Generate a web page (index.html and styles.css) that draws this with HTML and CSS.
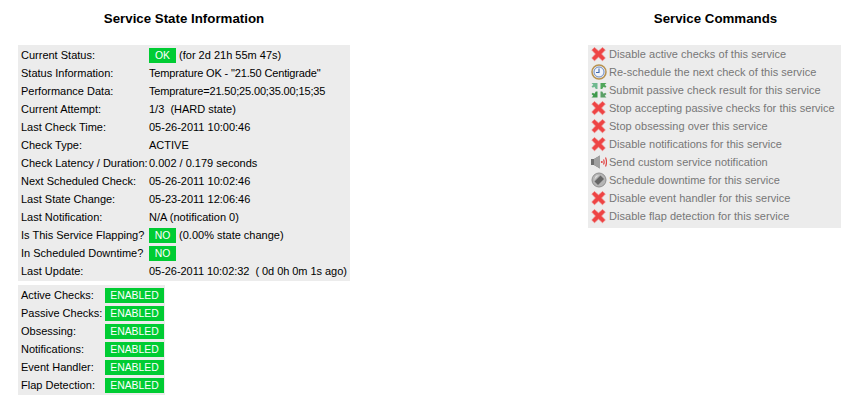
FILE: index.html
```html
<!doctype html>
<html>
<head>
<meta charset="utf-8">
<title>Service Information</title>
<link rel="stylesheet" href="styles.css">
</head>
<body>
<svg class="defs" width="0" height="0">
  <symbol id="i-x" viewBox="0 0 16 16">
    <path d="M3.500 1.500 7.500 5 11.500 1.500 14.300 4 10.500 8 14.300 12 11.500 14.800 7.500 11 3.500 14.800 .8 12 4.500 8 .8 4Z" fill="#ee4444" stroke="#ee8080" stroke-width=".7"/>
  </symbol>
  <symbol id="i-clock" viewBox="0 0 16 16">
    <circle cx="8" cy="8" r="7" fill="#e4e9f2" stroke="#b8924f" stroke-width="1.500"/>
    <circle cx="8" cy="8" r="5" fill="#f0f4fb" stroke="#6f8cc0" stroke-width="1"/>
    <path d="M8 4.500V8.500H5" fill="none" stroke="#3f68ad" stroke-width="1.100"/>
  </symbol>
  <symbol id="i-passive" viewBox="0 0 16 16">
    <path d="M.5 1H6.500V7H4.800L3.400 4.800 1.800 5.800.5 4.500 2.300 2.700Z" fill="#6fb98f"/>
    <path d="M15.500 1H9.500V7H11.200L12.600 4.800 14.200 5.800 15.500 4.500 13.700 2.700Z" fill="#4fa65a"/>
    <path d="M.5 15.500H6.500V9.500H4.800L3.400 11.700 1.800 10.700.5 12 2.300 13.800Z" fill="#3f9a4c"/>
    <path d="M15.500 15.500H9.500V9.500H11.200L12.600 11.700 14.200 10.700 15.500 12 13.700 13.800Z" fill="#5a9f65"/>
  </symbol>
  <symbol id="i-speaker" viewBox="0 0 16 16">
    <path d="M0 5H3L9 1.500V14.500L3 11H0Z" fill="#6f6f6f"/>
    <path d="M3 5 9 1.500V14.500L3 11Z" fill="#a0a0a0"/>
    <path d="M12.500 5.500Q13.800 8 12.500 10.500M14.500 3.500Q16.500 8 14.500 12.500" fill="none" stroke="#e04545" stroke-width="1.200"/>
    <circle cx="10.800" cy="8" r="1" fill="#e04545"/>
  </symbol>
  <symbol id="i-downtime" viewBox="0 0 16 16">
    <circle cx="8" cy="8" r="7" fill="#b5b5b5" stroke="#8f8f8f"/>
    <path d="M3.500 9.500 9.500 3.500 13 7 7 13Z" fill="#666"/>
    <path d="M3 8 8 3 4.800 3.800Z" fill="#dedede"/>
  </symbol>
</svg>

<div class="page">
  <div class="col-state">
    <h1 class="title">Service State Information</h1>
    <div class="panel state-panel">
      <div class="row"><span class="label">Current Status:</span><span class="value"><span class="pill">OK</span>&nbsp;(for 2d 21h 55m 47s)</span></div>
      <div class="row"><span class="label">Status Information:</span><span class="value tight">Temprature OK - "21.50 Centigrade"</span></div>
      <div class="row"><span class="label">Performance Data:</span><span class="value tight">Temprature=21.50;25.00;35.00;15;35</span></div>
      <div class="row"><span class="label">Current Attempt:</span><span class="value">1/3&nbsp;&nbsp;(HARD state)</span></div>
      <div class="row"><span class="label">Last Check Time:</span><span class="value">05-26-2011 10:00:46</span></div>
      <div class="row"><span class="label">Check Type:</span><span class="value">ACTIVE</span></div>
      <div class="row"><span class="label">Check Latency / Duration:</span><span class="value">0.002&nbsp;/&nbsp;0.179 seconds</span></div>
      <div class="row"><span class="label">Next Scheduled Check:</span><span class="value">05-26-2011 10:02:46</span></div>
      <div class="row"><span class="label">Last State Change:</span><span class="value">05-23-2011 12:06:46</span></div>
      <div class="row"><span class="label">Last Notification:</span><span class="value">N/A (notification 0)</span></div>
      <div class="row"><span class="label">Is This Service Flapping?</span><span class="value"><span class="pill">NO</span>&nbsp;(0.00% state change)</span></div>
      <div class="row"><span class="label">In Scheduled Downtime?</span><span class="value"><span class="pill">NO</span></span></div>
      <div class="row"><span class="label">Last Update:</span><span class="value update">05-26-2011 10:02:32&nbsp;&nbsp;( 0d 0h 0m 1s ago)</span></div>
    </div>
    <div class="panel checks-panel">
      <div class="row"><span class="label">Active Checks:</span><span class="pill pill-wide">ENABLED</span></div>
      <div class="row"><span class="label">Passive Checks:</span><span class="pill pill-wide">ENABLED</span></div>
      <div class="row"><span class="label">Obsessing:</span><span class="pill pill-wide">ENABLED</span></div>
      <div class="row"><span class="label">Notifications:</span><span class="pill pill-wide">ENABLED</span></div>
      <div class="row"><span class="label">Event Handler:</span><span class="pill pill-wide">ENABLED</span></div>
      <div class="row"><span class="label">Flap Detection:</span><span class="pill pill-wide">ENABLED</span></div>
    </div>
  </div>

  <div class="col-commands">
    <h1 class="title title-commands">Service Commands</h1>
    <div class="panel commands-panel">
      <a class="cmd"><svg class="icon"><use href="#i-x"/></svg>Disable active checks of this service</a>
      <a class="cmd"><svg class="icon"><use href="#i-clock"/></svg>Re-schedule the next check of this service</a>
      <a class="cmd"><svg class="icon"><use href="#i-passive"/></svg>Submit passive check result for this service</a>
      <a class="cmd"><svg class="icon"><use href="#i-x"/></svg>Stop accepting passive checks for this service</a>
      <a class="cmd"><svg class="icon"><use href="#i-x"/></svg>Stop obsessing over this service</a>
      <a class="cmd"><svg class="icon"><use href="#i-x"/></svg>Disable notifications for this service</a>
      <a class="cmd"><svg class="icon"><use href="#i-speaker"/></svg>Send custom service notification</a>
      <a class="cmd"><svg class="icon"><use href="#i-downtime"/></svg>Schedule downtime for this service</a>
      <a class="cmd"><svg class="icon"><use href="#i-x"/></svg>Disable event handler for this service</a>
      <a class="cmd"><svg class="icon"><use href="#i-x"/></svg>Disable flap detection for this service</a>
    </div>
  </div>
</div>
</body>
</html>
```
FILE: styles.css
```css
body {
  margin: 0;
  background: #fff;
  color: #000;
  font-family: "Liberation Sans", Arial, sans-serif;
  font-size: 11px;
}
.defs {
  position: absolute;
}
.page {
  display: flex;
  padding: 11px 23px 0 18px;
  justify-content: space-between;
}
.title {
  margin: 0 0 18px;
  font-size: 13.300px;
  line-height: 16px;
  font-weight: bold;
  text-align: center;
}
.title-commands {
  padding-left: 2px;
}
.panel {
  background: #ececec;
}
.col-state {
  width: 332px;
}
.state-panel {
  padding: 1px 3px;
  margin-bottom: 4px;
}
.row {
  display: flex;
  align-items: center;
  height: 18px;
  white-space: nowrap;
}
.label {
  flex: none;
}
.state-panel .label {
  width: 128px;
}
.tight {
  letter-spacing: -.15px;
}
.update {
  letter-spacing: -.05px;
}
.pill {
  display: inline-block;
  width: 27px;
  height: 15px;
  line-height: 15px;
  font-size: 10.400px;
  text-align: center;
  color: #fff;
  background: #00cc33;
}
.checks-panel {
  width: 144px;
  padding: 1px 0 1px 3px;
}
.checks-panel .label {
  width: 84px;
}
.pill-wide {
  width: 59px;
}
.col-commands {
  width: 253px;
}
.commands-panel {
  padding: 0 0 3px 3px;
}
.cmd {
  display: flex;
  align-items: center;
  height: 18px;
  color: #777;
  letter-spacing: .03px;
  white-space: nowrap;
}
.icon {
  width: 16px;
  height: 16px;
  margin-right: 2px;
  flex: none;
}
```
